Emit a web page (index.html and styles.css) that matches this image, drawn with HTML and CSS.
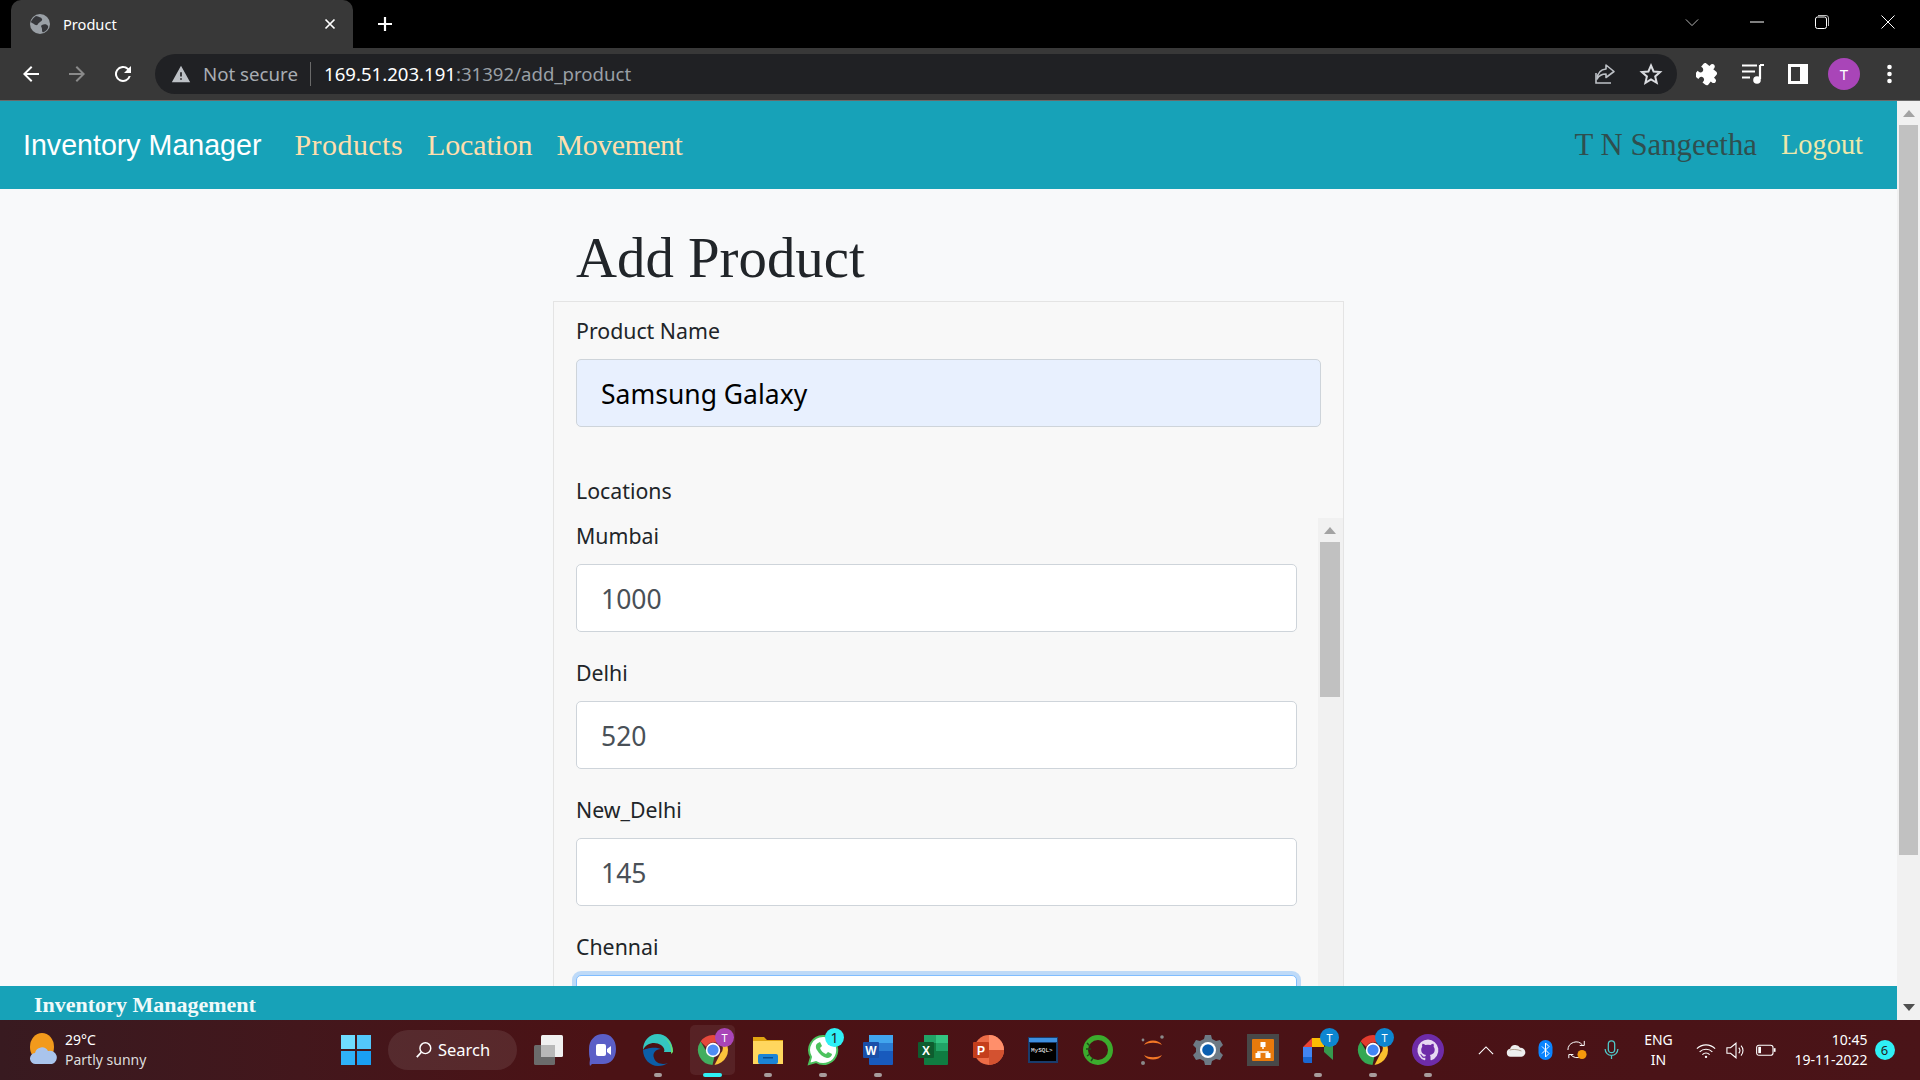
FILE: index.html
```html
<!DOCTYPE html>
<html lang="en">
<head>
<meta charset="utf-8">
<title>Product</title>
<link rel="stylesheet" href="styles.css">
</head>
<body>
<svg class="defs" width="0" height="0" aria-hidden="true">
  <symbol id="chrome" viewBox="0 0 32 32">
    <path d="M16 1a15 15 0 0 1 13 7.5H16a7.5 7.5 0 0 0-6.9 4.5L3.6 7.5A15 15 0 0 1 16 1z" fill="#e33b2e"/>
    <path d="M29 8.500a15 15 0 0 1-11.500 22.400l6-11.400a7.500 7.500 0 0 0 0-11z" fill="#fbc02d"/>
    <path d="M3.600 7.500 9.500 17.500a7.500 7.500 0 0 0 8 5l-2 8.500A15 15 0 0 1 3.600 7.500z" fill="#34a853"/>
    <circle cx="16" cy="16" r="7.200" fill="#fff"/>
    <circle cx="16" cy="16" r="5.600" fill="#4285f4"/>
  </symbol>
</svg>

<div class="tabstrip">
  <div class="tab">
    <svg class="tab-globe" viewBox="0 0 20 20"><circle cx="10" cy="10" r="10" fill="#9aa0a6"/><path d="M6 2c3 1 5 1 6 3s-3 3-4 5-3 1-4 0-3-1-3-2 3-5 5-6zM12 11c2-1 5-1 6 1s-2 5-4 6-2-1-2-3-2-3 0-4z" fill="#35363a"/></svg>
    <span class="tab-title">Product</span>
    <svg class="tab-close" viewBox="0 0 12 12"><path d="M1.500 1.500l9 9M10.500 1.500l-9 9" stroke="#fff" stroke-width="1.700"/></svg>
  </div>
  <svg class="new-tab" viewBox="0 0 16 16"><path d="M8 1v14M1 8h14" stroke="#fff" stroke-width="2.200"/></svg>
  <div class="win-controls">
    <svg class="win-btn win-chevron" viewBox="0 0 16 10"><path d="M1 1.500l7 7 7-7" fill="none" stroke="#ccc" stroke-width="1"/></svg>
    <svg class="win-btn win-min" viewBox="0 0 14 14"><path d="M0 7h14" stroke="#fff" stroke-width="1"/></svg>
    <svg class="win-btn win-max" viewBox="0 0 14 14"><rect x=".5" y="2" width="11" height="11.500" rx="2" fill="none" stroke="#fff"/><path d="M3 .5h8a2.500 2.500 0 0 1 2.500 2.500v8" fill="none" stroke="#bbb"/></svg>
    <svg class="win-btn win-close" viewBox="0 0 14 14"><path d="M.5.500l13 13M13.500.500l-13 13" stroke="#fff" stroke-width="1"/></svg>
  </div>
</div>

<div class="toolbar">
  <svg class="tool-icon back" viewBox="0 0 24 24"><path d="M20 11H7.800l5.600-5.600L12 4l-8 8 8 8 1.400-1.400L7.800 13H20z" fill="#fff"/></svg>
  <svg class="tool-icon forward" viewBox="0 0 24 24"><path d="M4 11h12.200l-5.600-5.600L12 4l8 8-8 8-1.400-1.400 5.600-5.600H4z" fill="#8a8a8a"/></svg>
  <svg class="tool-icon reload" viewBox="0 0 24 24"><path d="M17.650 6.350A8 8 0 1 0 19.730 14h-2.080A6 6 0 1 1 12 6c1.660 0 3.140.69 4.220 1.780L13 11h7V4z" fill="#fff"/></svg>
  <div class="omnibox">
    <svg class="warn" viewBox="0 0 24 24"><path d="M1 22h22L12 2zm12-3h-2v-2h2zm0-4h-2v-5h2z" fill="#bdc1c6"/></svg>
    <span class="not-secure">Not secure</span>
    <span class="omni-sep"></span>
    <span class="url"><b class="url-host">169.51.203.191</b>:31392/add_product</span>
    <svg class="omni-icon share" viewBox="0 0 24 24"><path d="M4 11v10h15" fill="none" stroke="#bdc1c6" stroke-width="1.600"/><path d="M14 3l8 6.500-8 6v-3.500c-4 0-7 1.500-9 5 .5-6 4-9.500 9-10z" fill="none" stroke="#bdc1c6" stroke-width="1.600" stroke-linejoin="round"/></svg>
    <svg class="omni-icon star" viewBox="0 0 24 24"><path d="M12 3.500l2.600 6 6.500.6-4.900 4.300 1.500 6.400-5.700-3.400-5.600 3.400 1.500-6.400-5-4.300 6.500-.6z" fill="none" stroke="#dadce0" stroke-width="2"/></svg>
  </div>
  <div class="tool-right">
    <svg class="ext puzzle" viewBox="0 0 24 24"><path transform="rotate(40 12 12)" d="M20.500 11H19V7c0-1.100-.9-2-2-2h-4V3.500C13 2.120 11.880 1 10.500 1S8 2.120 8 3.500V5H4c-1.100 0-2 .9-2 2v3.800h1.500c1.490 0 2.700 1.210 2.700 2.700s-1.210 2.700-2.700 2.700H2V20c0 1.100.9 2 2 2h3.800v-1.500c0-1.490 1.210-2.700 2.700-2.700s2.700 1.210 2.700 2.700V22H17c1.100 0 2-.9 2-2v-4h1.500c1.380 0 2.500-1.120 2.500-2.500S21.880 11 20.500 11z" fill="#fff"/></svg>
    <svg class="ext media" viewBox="0 0 24 24"><path d="M1 3.500h15M1 9.500h13M1 15.500h8" stroke="#fff" stroke-width="2.200"/><path d="M19 3h4M19 3v14" stroke="#fff" stroke-width="2.200"/><circle cx="16" cy="18" r="3.800" fill="#fff"/></svg>
    <svg class="ext panel" viewBox="0 0 20 20"><rect x="1.500" y="1.500" width="17" height="17" fill="none" stroke="#fff" stroke-width="3"/><rect x="12" y="2" width="6" height="16" fill="#fff"/></svg>
    <span class="avatar">T</span>
    <svg class="ext menu" viewBox="0 0 6 20"><circle cx="3" cy="3" r="2.300" fill="#fff"/><circle cx="3" cy="10" r="2.300" fill="#fff"/><circle cx="3" cy="17" r="2.300" fill="#fff"/></svg>
  </div>
</div>

<div class="viewport">
  <div class="page">
    <nav class="navbar">
      <a class="brand">Inventory Manager</a>
      <a class="nav-link nav-products">Products</a>
      <a class="nav-link nav-location">Location</a>
      <a class="nav-link nav-movement">Movement</a>
      <span class="nav-user">T N Sangeetha</span>
      <a class="nav-logout">Logout</a>
    </nav>
    <main class="content">
      <div class="container">
        <h1 class="title">Add Product</h1>
        <form class="card">
          <label class="field-label first">Product Name</label>
          <div class="control autofilled">Samsung Galaxy</div>
          <label class="field-label locations">Locations</label>
          <div class="loc-wrap">
            <div class="loc-list">
              <label class="field-label">Mumbai</label>
              <div class="control num">1000</div>
              <label class="field-label">Delhi</label>
              <div class="control num">520</div>
              <label class="field-label">New_Delhi</label>
              <div class="control num">145</div>
              <label class="field-label">Chennai</label>
              <div class="control num focus"></div>
            </div>
            <div class="inner-scroll">
              <span class="arrow-up small"></span>
              <span class="inner-thumb"></span>
            </div>
          </div>
        </form>
      </div>
    </main>
    <footer class="site-footer">Inventory Management</footer>
  </div>
  <div class="page-scroll">
    <span class="arrow-up"></span>
    <span class="page-thumb"></span>
    <span class="arrow-down"></span>
  </div>
</div>

<div class="taskbar">
  <div class="weather">
    <svg class="weather-icon" viewBox="0 0 30 34"><ellipse cx="14" cy="14" rx="12" ry="14" fill="#f29a1c"/><path d="M8 31a5.500 5.500 0 0 1-1-11 7 7 0 0 1 13-2 6 6 0 0 1 4 13z" fill="#a9c4ec"/></svg>
    <div class="weather-text"><span class="temp">29°C</span><span class="cond">Partly sunny</span></div>
  </div>
  <svg class="start" viewBox="0 0 30 30"><rect width="14" height="14" fill="#6fdcff"/><rect x="16" width="14" height="14" fill="#53c8fb"/><rect y="16" width="14" height="14" fill="#2fb1f8"/><rect x="16" y="16" width="14" height="14" fill="#1a9ff3"/></svg>
  <div class="search">
    <svg class="search-glass" viewBox="0 0 20 20"><circle cx="11.500" cy="8" r="6" fill="none" stroke="#fff" stroke-width="1.600"/><path d="M7 12.500 2 18" stroke="#fff" stroke-width="2"/></svg>
    <span>Search</span>
  </div>
  <div class="apps">
    <div class="app">
      <svg viewBox="0 0 32 32"><rect x="2" y="11" width="21" height="20" rx="1.500" fill="#6b6b6b"/><rect x="9" y="1" width="22" height="22" rx="1.500" fill="#f0f0f0"/><rect x="9" y="11" width="14" height="12" fill="#b8b8b8"/></svg>
    </div>
    <div class="app">
      <svg viewBox="0 0 32 32"><path d="M16 0c8 0 13 6 13 15s-5 15-13 15H5l-2 2c-1-3 0-5 0-7-1-3-1-6-1-10C2 6 8 0 16 0z" fill="#5b5fc7"/><rect x="9" y="10" width="10" height="12" rx="2" fill="#fff"/><path d="M20 15l4-3v9l-4-3z" fill="#fff"/></svg>
    </div>
    <div class="app">
      <svg viewBox="0 0 32 32"><path d="M31 18C31 7 24 0 15.500 0 7 0 1 7 1 16c3-7 12-9 18-5 3 2 4 5 3 7z" fill="#34c6c0"/><path d="M31 18c0-6-4-13-11-15 6 2 10 8 9 17z" fill="#6be06b"/><path d="M1 16c0 9 7 16 15 16 4 0 7-1 10-3-5 2-12 1-14-5-2-5 2-9 7-9-7-3-16 0-18 1z" fill="#0c5ea8"/></svg>
      <i class="pin"></i>
    </div>
    <div class="app active">
      <svg viewBox="0 0 32 32"><use href="#chrome"/></svg>
      <b class="app-badge purple">T</b>
      <i class="pin cyan"></i>
    </div>
    <div class="app">
      <svg viewBox="0 0 32 32"><path d="M1 3h11l3 3h16v24H1z" fill="#e0a411"/><path d="M1 7h30v23H1z" fill="#ffd75e"/><rect x="6" y="20" width="20" height="10" rx="2" fill="#1b84d6"/><rect x="11" y="23" width="10" height="1.500" fill="#0a4f8f"/></svg>
      <i class="pin"></i>
    </div>
    <div class="app">
      <svg viewBox="0 0 32 32"><path d="M16 2a14 14 0 0 0-12 21L2 30l7-2A14 14 0 1 0 16 2z" fill="#fff" stroke="#4cc25d" stroke-width="2"/><path d="M11 9c-2 1-3 4-1 7 2 4 6 7 10 8 3 0 5-2 5-4l-4-2-2 2c-3-1-5-3-6-6l2-2-2-4z" fill="#4cc25d"/></svg>
      <b class="app-badge cyan-badge">1</b>
      <i class="pin"></i>
    </div>
    <div class="app">
      <svg viewBox="0 0 32 32"><rect x="7" y="1" width="24" height="30" rx="1" fill="#185abd"/><rect x="7" y="1" width="24" height="8" fill="#41a5ee"/><rect x="7" y="9" width="24" height="8" fill="#2b7cd3"/><rect x="1" y="8" width="16" height="16" rx="1" fill="#1a4fa8"/><text class="icon-letter" x="9" y="21">W</text></svg>
      <i class="pin"></i>
    </div>
    <div class="app">
      <svg viewBox="0 0 32 32"><rect x="7" y="1" width="24" height="30" rx="1" fill="#107c41"/><rect x="19" y="1" width="12" height="8" fill="#33c481"/><rect x="19" y="9" width="12" height="8" fill="#21a366"/><rect x="7" y="1" width="12" height="8" fill="#21a366"/><rect x="1" y="8" width="16" height="16" rx="1" fill="#0e5c2f"/><text class="icon-letter" x="9" y="21">X</text></svg>
    </div>
    <div class="app">
      <svg viewBox="0 0 32 32"><circle cx="17" cy="16" r="15" fill="#ed6c47"/><path d="M17 1a15 15 0 0 1 15 15H17z" fill="#ff8f6b"/><path d="M17 16h15a15 15 0 0 1-15 15z" fill="#d35230"/><rect x="1" y="8" width="16" height="16" rx="1" fill="#c43e1c"/><text class="icon-letter" x="9" y="21">P</text></svg>
    </div>
    <div class="app">
      <svg viewBox="0 0 32 32"><rect x="1" y="3" width="30" height="26" fill="#1a3c6c"/><rect x="2" y="4" width="28" height="4" fill="#3d8fe0"/><rect x="3" y="9" width="26" height="18" fill="#000"/><text class="icon-mono" x="4" y="18">MySQL&gt;</text></svg>
    </div>
    <div class="app">
      <svg viewBox="0 0 32 32"><circle cx="16" cy="16" r="12.500" fill="none" stroke="#3cab2d" stroke-width="5"/><path d="M5 9l3 3M4 15h5M5 22l3-2M9 27l2-3" stroke="#1d4d18" stroke-width="1.500"/></svg>
    </div>
    <div class="app">
      <svg viewBox="0 0 32 32"><path d="M7 11c3-6 15-6 18 0-5-3-13-3-18 0zM7 21c3 6 15 6 18 0-5 3-13 3-18 0z" fill="#f37726"/><circle cx="25" cy="3" r="1.800" fill="#8a8a8a"/><circle cx="6" cy="6" r="1.400" fill="#8a8a8a"/><circle cx="6" cy="29" r="2" fill="#8a8a8a"/></svg>
    </div>
    <div class="app">
      <svg viewBox="0 0 32 32"><path d="M13 1h6l1 4 4 2 4-1 3 5-3 3v4l3 3-3 5-4-1-4 2-1 4h-6l-1-4-4-2-4 1-3-5 3-3v-4l-3-3 3-5 4 1 4-2z" fill="#6d7a85"/><circle cx="16" cy="16" r="8" fill="#fff"/><circle cx="16" cy="16" r="5.800" fill="#0a5fb0"/></svg>
    </div>
    <div class="app">
      <svg viewBox="0 0 32 32"><rect width="32" height="32" fill="#484848"/><rect x="5" y="5" width="22" height="22" rx="1" fill="#e87a0c"/><path d="M16 10v5M11 21v-3h10v3" fill="none" stroke="#fff" stroke-width="1.500"/><rect x="13.500" y="8" width="5" height="5" fill="#fff"/><rect x="8.500" y="19" width="5" height="5" fill="#fff"/><rect x="18.500" y="19" width="5" height="5" fill="#fff"/></svg>
    </div>
    <div class="app">
      <svg viewBox="0 0 32 32"><path d="M1 13 10 4h12v9H10v10H1z" fill="#ea4335"/><path d="M10 4h12v9H10z" fill="#fbbc04"/><path d="M1 13h9v10H1z" fill="#4285f4"/><path d="M1 23h9v6H3a2 2 0 0 1-2-2z" fill="#1967d2"/><path d="M10 23h12v-5l9 8V6l-9 7v-0H10z" fill="#34a853" opacity=".9"/><rect x="10" y="13" width="12" height="10" fill="#4a1216"/></svg>
      <b class="app-badge blue-badge">T</b>
      <i class="pin"></i>
    </div>
    <div class="app">
      <svg viewBox="0 0 32 32"><use href="#chrome"/></svg>
      <b class="app-badge blue-badge">T</b>
      <i class="pin"></i>
    </div>
    <div class="app">
      <svg viewBox="0 0 32 32"><circle cx="16" cy="16" r="16" fill="#6e2ca8"/><path d="M16 5.500A10.700 10.700 0 0 0 12.600 26.300c.5.100.7-.2.700-.5v-2c-3 .6-3.600-1.300-3.600-1.300-.5-1.200-1.200-1.600-1.200-1.600-1-.7.100-.6.100-.6 1.100 0 1.700 1.100 1.700 1.100 1 1.600 2.500 1.200 3.100.9.100-.7.400-1.200.7-1.400-2.400-.3-4.900-1.200-4.900-5.300 0-1.200.4-2.100 1.100-2.900-.1-.3-.5-1.400.1-2.800 0 0 .9-.3 2.900 1.100a10 10 0 0 1 5.300 0c2-1.400 2.900-1.100 2.900-1.100.6 1.400.2 2.500.1 2.800.7.700 1.100 1.700 1.100 2.900 0 4.100-2.500 5-4.900 5.300.4.300.7 1 .7 2v2.900c0 .3.200.6.700.5A10.700 10.700 0 0 0 16 5.500z" fill="#e6d9f2"/></svg>
      <i class="pin"></i>
    </div>
  </div>
  <div class="tray">
    <svg class="tray-chevron" viewBox="0 0 18 10"><path d="M1 9l8-8 8 8" fill="none" stroke="#fff" stroke-width="1.300"/></svg>
    <svg class="tray-cloud" viewBox="0 0 22 14"><path d="M5 14a4.500 4.500 0 0 1-.5-8.900 6 6 0 0 1 11-1A5 5 0 0 1 17 14z" fill="#eee"/><path d="M4 6.500c3-1 8-1 13 1" fill="none" stroke="#a98" stroke-width="1"/></svg>
    <svg class="tray-bt" viewBox="0 0 14 20"><rect width="14" height="20" rx="7" fill="#0a84ff"/><path d="M3.500 6.500l7 7-3.500 3.500V3l3.500 3.500-7 7" fill="none" stroke="#fff" stroke-width="1"/></svg>
    <svg class="tray-sync" viewBox="0 0 22 22"><path d="M1 11a9 9 0 0 1 16-5.500M19 1v5h-5M2 20v-4h5M16 18a9 9 0 0 1-12-2" fill="none" stroke="#fff" stroke-width="1.100"/><circle cx="16.500" cy="16" r="5" fill="#f59a0c"/></svg>
    <svg class="tray-mic" viewBox="0 0 16 22"><rect x="4.500" y="1" width="7" height="13" rx="3.500" fill="none" stroke="#4fc8c8" stroke-width="1.400"/><path d="M1 10a7 7 0 0 0 14 0M8 17v4" fill="none" stroke="#4fc8c8" stroke-width="1.400"/></svg>
    <div class="lang"><span>ENG</span><span>IN</span></div>
    <svg class="tray-wifi" viewBox="0 0 22 16"><path d="M1 6a14 14 0 0 1 20 0M4 9.500a10 10 0 0 1 14 0M7 12.500a6 6 0 0 1 8 0" fill="none" stroke="#fff" stroke-width="1.300"/><circle cx="11" cy="15" r="1.300" fill="#fff"/></svg>
    <svg class="tray-vol" viewBox="0 0 22 18"><path d="M1 6v6h4l6 5V1L5 6z" fill="none" stroke="#fff" stroke-width="1.200"/><path d="M14 6a4 4 0 0 1 0 6M16.500 3.500a8 8 0 0 1 0 11" fill="none" stroke="#fff" stroke-width="1.200"/></svg>
    <svg class="tray-bat" viewBox="0 0 22 14"><rect x=".7" y="1.700" width="18" height="11" rx="2.500" fill="none" stroke="#fff" stroke-width="1.200"/><rect x="2.500" y="3.500" width="3" height="7" fill="#fff"/><rect x="19.500" y="5" width="2" height="4" fill="#fff"/></svg>
    <div class="clock"><span>10:45</span><span>19-11-2022</span></div>
    <span class="notif">6</span>
  </div>
</div>
</body>
</html>
```

FILE: styles.css
```css
* { box-sizing: border-box; }
html, body { margin: 0; height: 100%; overflow: hidden; }
body {
  width: 1920px;
  height: 1080px;
  display: flex;
  flex-direction: column;
  font-family: "Noto Sans", sans-serif;
  background: #f8f9fa;
}
.defs { position: absolute; }
svg { display: block; flex: none; }

/* tab strip */
.tabstrip { height: 48px; background: #000; display: flex; align-items: flex-start; padding-left: 11px; flex: none; }
.tab {
  width: 342px; height: 48px; background: #383838; border-radius: 10px 10px 0 0;
  display: flex; align-items: center; padding: 0 16px 0 19px;
}
.tab-globe { width: 20px; height: 20px; }
.tab-title { color: #fff; font-size: 14.600px; margin-left: 13px; flex: 1; }
.tab-close { width: 12px; height: 12px; margin-right: 1px; }
.new-tab { width: 16px; height: 16px; margin: 16px 0 0 24px; }
.win-controls { margin-left: auto; display: flex; align-items: center; height: 44px; }
.win-btn { width: 14px; height: 14px; }
.win-chevron { width: 14px; height: 9px; margin-right: 51px; }
.win-min { margin-right: 51px; }
.win-max { margin-right: 52px; }
.win-close { margin-right: 25px; }

/* toolbar */
.toolbar { height: 53px; background: #383838; border-bottom: 1px solid #6a6a6a; display: flex; align-items: center; padding: 0 0 1px 19px; flex: none; }
.tool-icon { width: 24px; height: 24px; }
.forward { margin-left: 22px; }
.reload { margin-left: 22px; }
.omnibox {
  width: 1522px; height: 40px; margin-left: 20px; background: #202124; border-radius: 20px;
  display: flex; align-items: center; padding-left: 16px;
}
.warn { width: 20px; height: 20px; }
.not-secure { color: #a8adb3; font-size: 18.700px; margin-left: 12px; }
.omni-sep { width: 1px; height: 24px; background: #6a6a6a; margin: 0 13px 0 12px; }
.url { color: #9aa0a6; font-size: 18.600px; }
.url-host { color: #fff; font-weight: 400; }
.omni-icon { width: 24px; height: 24px; }
.share { margin-left: auto; }
.star { margin: 0 14px 0 23px; }
.tool-right { display: flex; align-items: center; margin-left: 19px; }
.ext { width: 24px; height: 24px; }
.media { margin-left: 21px; }
.panel { width: 20px; height: 20px; margin-left: 23px; }
.avatar {
  width: 32px; height: 32px; border-radius: 50%; background: #a945b8; color: #fff;
  display: flex; align-items: center; justify-content: center; font-size: 15px; margin-left: 20px;
}
.menu { width: 7px; height: 20px; margin-left: 26px; }

/* page */
.viewport { height: 919px; display: flex; flex: none; }
.page { flex: 1; display: flex; flex-direction: column; min-width: 0; }
.navbar {
  height: 88px; background: #17a2b8; display: flex; align-items: center; padding: 0 34px 0 23px; flex: none;
  font-family: "Liberation Serif", serif; font-size: 30px;
}
.brand { font-family: "Liberation Sans", sans-serif; font-size: 28.600px; color: #fff; margin-right: 9px; }
.nav-link { color: #ffdead; margin-left: 24px; }
.nav-products { letter-spacing: .45px; }
.nav-location { letter-spacing: -.15px; }
.nav-movement { letter-spacing: -.5px; }
.nav-user { color: #2f4f4f; margin-left: auto; font-size: 30.800px; }
.nav-logout { color: #eee8aa; margin-left: 24px; font-size: 28.400px; }
.content { flex: 1; overflow: hidden; min-height: 0; }
.container { width: 791px; margin: 0 auto; }
.title {
  margin: 35px 0 10px; padding-left: 23px; font-family: "Liberation Serif", serif;
  font-weight: 400; font-size: 56.800px; line-height: 67px; color: #212529;
}
.card { border: 1px solid #e4e4e4; background: #f8f8f8; padding: 14px 22px 0; height: 800px; }
.field-label { display: block; font-size: 21.300px; line-height: 30px; color: #212529; margin-bottom: 13px; }
.control {
  height: 68px; border: 1px solid #ced4da; border-radius: 5px; background: #fff;
  font-size: 26.500px; line-height: 68px; padding-left: 24px; color: #000;
}
.autofilled { background: #e8f0fe; height: 68px; }
.locations { margin: 49px 0 12px; }
.loc-wrap { display: flex; height: 600px; margin-right: -22px; }
.loc-list { width: 721px; padding-top: 3px; margin-right: 21px; }
.num { color: #495057; margin-bottom: 26px; }
.focus { border-color: #80bdff; box-shadow: 0 0 0 4px #bedaf8; }
.inner-scroll { width: 25px; background: #f1f1f1; display: flex; flex-direction: column; align-items: center; padding-right: 1px; }
.inner-thumb { width: 20px; height: 155px; background: #c1c1c1; margin-top: 8px; }
.arrow-up { width: 0; height: 0; border: 6px solid transparent; border-top: 0; border-bottom: 7px solid #a3a3a3; margin-top: 9px; }
.arrow-up.small { margin-top: 9px; border-width: 0 6px 7px; }
.site-footer {
  height: 34px; flex: none; background: #17a2b8; color: #f0fafa; padding-left: 34px;
  font-family: "Liberation Serif", serif; font-weight: 700; font-size: 22px; line-height: 37px;
}
.page-scroll { width: 23px; background: #f1f1f1; display: flex; flex-direction: column; align-items: center; }
.page-thumb { width: 19px; height: 730px; background: #c1c1c1; margin-top: 8px; }
.arrow-down { width: 0; height: 0; border: 6px solid transparent; border-bottom: 0; border-top: 7px solid #505050; margin-top: auto; margin-bottom: 9px; }

/* taskbar */
.taskbar {
  height: 60px; flex: none; display: flex; align-items: center; position: relative;
  background: linear-gradient(90deg, #381a20 0, #43171c 300px, #4b1215 600px, #4a1216 1400px, #4a1418 1920px);
  color: #fff;
}
.weather { display: flex; align-items: center; width: 341px; padding-left: 28px; }
.weather-icon { width: 30px; height: 34px; }
.weather-text { display: flex; flex-direction: column; margin-left: 7px; font-size: 14px; line-height: 20px; }
.cond { color: #ddd; }
.start { width: 30px; height: 30px; }
.search {
  width: 129px; height: 40px; margin-left: 17px; border-radius: 20px; background: rgba(255,255,255,.09);
  display: flex; align-items: center; justify-content: center; gap: 5px; font-size: 16.500px; padding-bottom: 1px;
}
.search-glass { width: 18px; height: 18px; }
.apps { display: flex; margin-left: 3px; }
.app { width: 55px; height: 60px; display: flex; align-items: center; justify-content: center; position: relative; }
.app svg { width: 32px; height: 32px; }
.app.active::before {
  content: ""; position: absolute; left: 5px; right: 5px; top: 5px; bottom: 5px;
  background: rgba(255,255,255,.07); border-radius: 5px;
}
.pin { position: absolute; left: 24px; bottom: 3px; width: 8px; height: 4px; border-radius: 2px; background: #a89c9c; }
.pin.cyan { left: 18px; width: 19px; background: #2ff0f5; }
.app-badge {
  position: absolute; left: 30px; top: 8px; width: 19px; height: 19px; border-radius: 50%;
  font-size: 11px; font-weight: 400; display: flex; align-items: center; justify-content: center; color: #fff;
}
.purple { background: #a945b8; }
.cyan-badge { background: #2ff0f5; color: #222; font-size: 14px; }
.blue-badge { background: #0d86d0; }
.icon-letter { font: 700 12px "Liberation Sans", sans-serif; fill: #fff; text-anchor: middle; }
.icon-mono { font: 6px "Liberation Mono", monospace; fill: #fff; }
.tray { display: flex; align-items: center; margin-left: auto; width: 462px; padding-left: 20px; position: relative; }
.tray-chevron { width: 16px; height: 9px; }
.tray-cloud { width: 20px; height: 13px; margin-left: 12px; }
.tray-bt { width: 15px; height: 20px; margin-left: 11.500px; }
.tray-sync { width: 20px; height: 20px; margin-left: 14px; }
.tray-mic { width: 15px; height: 20px; margin-left: 17px; }
.lang { width: 50px; display: flex; flex-direction: column; align-items: center; font-size: 14px; line-height: 20px; margin-left: 15px; }
.tray-wifi { width: 20px; height: 15px; margin-left: 12px; }
.tray-vol { width: 20px; height: 17px; margin-left: 10px; }
.tray-bat { width: 20px; height: 14px; margin-left: 10px; }
.clock { width: 92px; display: flex; flex-direction: column; align-items: flex-end; font-size: 14px; line-height: 20px; margin-left: 0; }
.notif {
  width: 20px; height: 20px; border-radius: 50%; background: #2ff0f5; color: #222; margin-left: 7px;
  display: flex; align-items: center; justify-content: center; font-size: 13px;
}
```
